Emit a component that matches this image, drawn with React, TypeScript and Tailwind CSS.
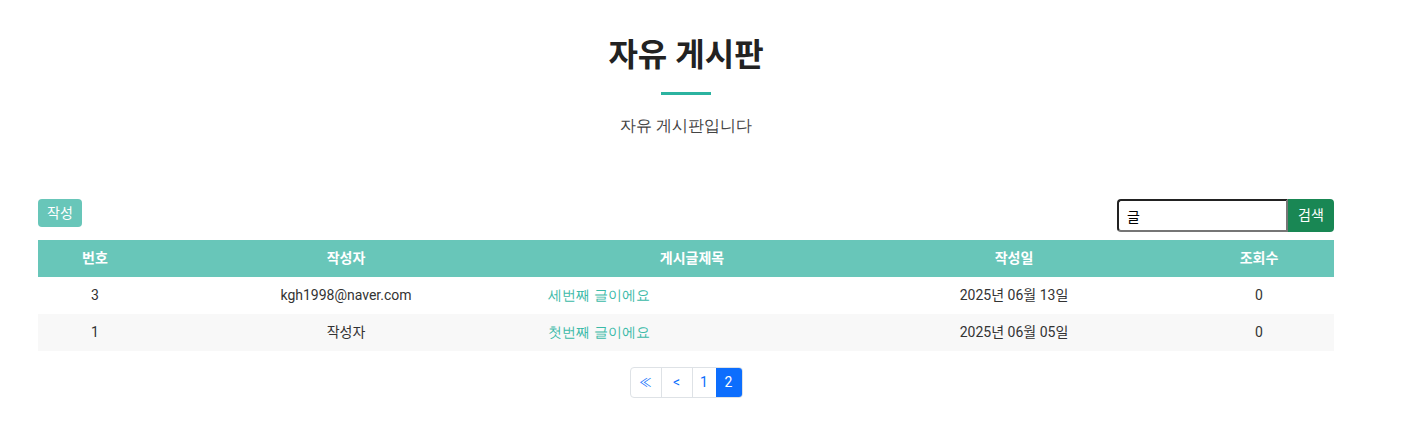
const posts = [
  { no: 3, writer: "kgh1998@naver.com", title: "세번째 글이에요", date: "2025년 06월 13일", views: 0 },
  { no: 1, writer: "작성자", title: "첫번째 글이에요", date: "2025년 06월 05일", views: 0 },
];

export default function App() {
  return (
    <div className="min-h-screen w-[1372px] bg-white text-[#333] font-['Roboto','Noto_Sans_CJK_KR',sans-serif]">
      {/* board heading */}
      <div className="flex flex-col items-center pt-[33px]">
        <h1 className="text-[32px] leading-[44px] font-bold text-[#222]">자유 게시판</h1>
        <div className="mt-[15px] h-[3px] w-[50px] bg-[#2bb3a0]" />
        <p className="mt-[18px] text-[16px] leading-[24px] text-[#444] font-sans">자유 게시판입니다</p>
      </div>

      <div className="mx-[38px] mt-[62px]">
        <div className="flex items-start justify-between">
          <button className="h-[28px] w-[44px] rounded-[4px] bg-[#68c6b9] text-[14px] text-white">작성</button>
          <div className="flex">
            <input
              defaultValue="글"
              className="h-[33px] w-[171px] rounded-l-[4px] border-2 border-t-[#222] border-l-[#222] border-b-[#767676] border-r-[#767676] px-[8px] text-[14px] text-black outline-none"
            />
            <button className="h-[33px] w-[46px] rounded-r-[4px] bg-[#198754] text-[14px] text-white">검색</button>
          </div>
        </div>

        <table className="mt-[8px] w-full table-fixed border-collapse text-[14px]">
          <colgroup>
            <col className="w-[114px]" />
            <col className="w-[388px]" />
            <col className="w-[304px]" />
            <col className="w-[340px]" />
            <col className="w-[150px]" />
          </colgroup>
          <thead>
            <tr className="h-[37px] bg-[#68c6b9] font-bold text-white">
              <th>번호</th>
              <th>작성자</th>
              <th>게시글제목</th>
              <th>작성일</th>
              <th>조회수</th>
            </tr>
          </thead>
          <tbody>
            {posts.map((p, i) => (
              <tr key={p.no} className={i % 2 === 1 ? "h-[37px] bg-[#f8f8f8]" : "h-[37px] bg-white"}>
                <td className="text-center">{p.no}</td>
                <td className="text-center">{p.writer}</td>
                <td className="px-[8px] pb-[3px] text-left text-[#3bbaa8] font-sans">{p.title}</td>
                <td className="text-center">{p.date}</td>
                <td className="text-center">{p.views}</td>
              </tr>
            ))}
          </tbody>
        </table>

        {/* pagination */}
        <div className="mt-[16px] flex justify-center">
          <div className="flex h-[31px] overflow-hidden rounded-[4px] border border-[#dee2e6] text-[14px]">
            <span className="flex w-[30px] items-center justify-center text-[12px] text-[#0d6efd]">≪</span>
            <span className="flex w-[31px] items-center justify-center border-l border-[#dee2e6] text-[#0d6efd]">&lt;</span>
            <span className="flex w-[24px] items-center justify-center border-l border-[#dee2e6] text-[#0d6efd]">1</span>
            <span className="flex w-[26px] items-center justify-center bg-[#0d6efd] text-white">2</span>
          </div>
        </div>
      </div>
    </div>
  );
}
